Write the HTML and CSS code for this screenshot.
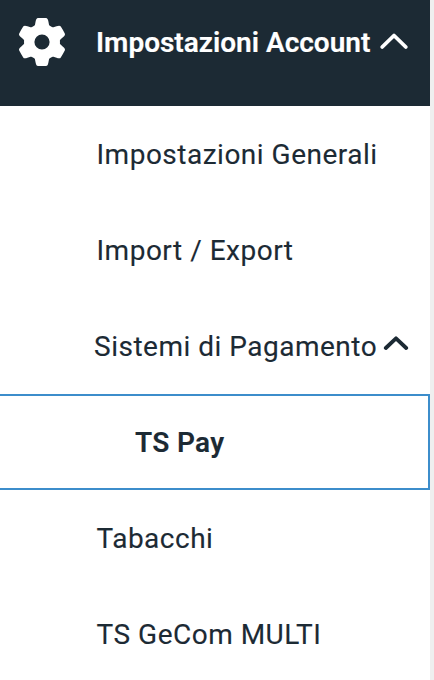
FILE: index.html
```html
<!DOCTYPE html>
<html lang="it">
<head>
<meta charset="utf-8">
<title>Impostazioni Account</title>
<link rel="stylesheet" href="styles.css">
</head>
<body>
<nav class="sidebar">
  <div class="header">
    <svg class="gear" viewBox="-24 -24 48 48">
      <defs><path id="tooth" d="M-8-14.500Q-6.800-17-6.400-20.500Q-5.800-24-4-24Q0-24.200 4-24Q5.800-24 6.400-20.500Q6.800-17 8-14.500Z"/></defs>
      <circle class="ring" r="12.800"/>
      <use href="#tooth"/>
      <use href="#tooth" transform="rotate(60)"/>
      <use href="#tooth" transform="rotate(120)"/>
      <use href="#tooth" transform="rotate(180)"/>
      <use href="#tooth" transform="rotate(240)"/>
      <use href="#tooth" transform="rotate(300)"/>
    </svg>
    <span class="title">Impostazioni Account</span>
    <svg class="chevron" viewBox="0 0 30 20"><path d="M3.200 15 15 3.500 26.800 15"/></svg>
  </div>
  <ul class="menu">
    <li class="item">Impostazioni Generali</li>
    <li class="item">Import / Export</li>
    <li class="item parent"><span class="label">Sistemi di Pagamento</span><svg class="chevron" viewBox="0 0 30 20"><path d="M4.800 12 15 2.300 25.200 12"/></svg></li>
    <li class="item active">TS Pay</li>
    <li class="item">Tabacchi</li>
    <li class="item">TS GeCom MULTI</li>
  </ul>
</nav>
</body>
</html>
```
FILE: styles.css
```css
* { box-sizing: border-box; }
body { margin: 0; background: #efefef; font-family: Roboto, sans-serif; color: #1c2a34; }
.sidebar { width: 430px; height: 680px; background: #fff; overflow: hidden; font-size: 28px; white-space: nowrap; }
.header { display: flex; align-items: center; height: 106px; padding: 0 0 22px 18px; background: #1c2a34; color: #fff; }
.gear { flex: none; width: 48px; height: 48px; margin-right: 30px; fill: #fff; }
.ring { fill: none; stroke: #fff; stroke-width: 10.4; }
.title { width: 274px; font-weight: 600; -webkit-text-stroke: 0.2px currentColor; }
.chevron { flex: none; width: 30px; height: 20px; margin-left: 9px; fill: none; stroke: currentColor; stroke-width: 3.8; stroke-linecap: round; stroke-linejoin: round; }
.menu { margin: 0; padding: 0; list-style: none; }
.item { display: flex; align-items: center; height: 96px; padding-left: 96.5px; letter-spacing: 0.5px; -webkit-text-stroke: 0.12px currentColor; }
.parent { padding-left: 94px; }
.label { width: 282px; }
.parent .chevron { margin-left: 5px; }
.active { padding-left: 135px; border: 2px solid #3c8dcb; border-left: 0; font-weight: 600; letter-spacing: 0.3px; }
```
